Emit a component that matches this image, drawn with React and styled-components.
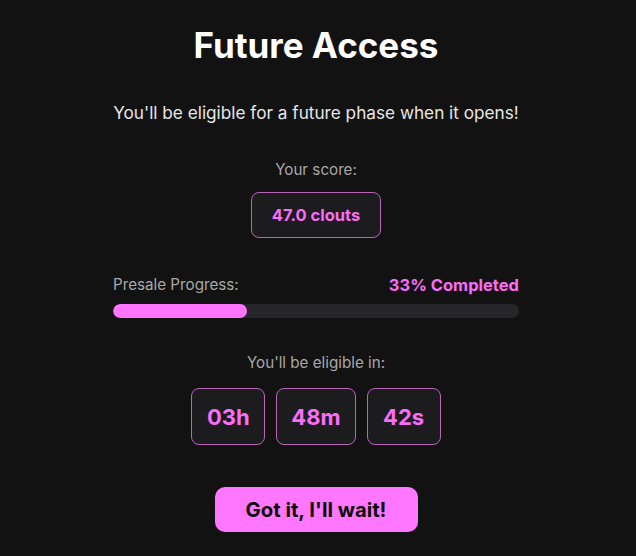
import React from "react";
import styled, { createGlobalStyle } from "styled-components";

const Global = createGlobalStyle`
  html, body { margin: 0; padding: 0; background: #121212; }
  body { font-family: Inter, "Noto Sans", sans-serif; color: #fff; }
`;

const Page = styled.div`
  width: 636px;
  height: 556px;
  box-sizing: border-box;
  padding: 24px 0 0 113px;
`;

const Column = styled.div`
  width: 406px;
  display: flex;
  flex-direction: column;
  align-items: center;
`;

const Title = styled.h1`
  margin: 0;
  font-size: 35px;
  font-weight: 700;
  line-height: 42px;
  color: #fff;
`;

const Subtitle = styled.p`
  margin: 35px 0 0;
  font-size: 17.2px;
  line-height: 24px;
  color: #e6e6e6;
  white-space: nowrap;
`;

const Label = styled.div`
  font-size: 15.2px;
  line-height: 20px;
  color: #a8a8a8;
  margin-top: ${(p) => p.$mt}px;
`;

const Box = styled.div`
  box-sizing: border-box;
  border: 1px solid #b865b8;
  border-radius: 8px;
  background: #1c1b1d;
  color: #f86ef8;
  font-weight: 700;
  display: flex;
  align-items: center;
  justify-content: center;
`;

const ScoreBox = styled(Box)`
  margin-top: 12px;
  width: 130px;
  height: 46px;
  font-size: 16.5px;
`;

const ProgressHead = styled.div`
  align-self: stretch;
  margin-top: 37px;
  display: flex;
  justify-content: space-between;
  align-items: flex-end;
`;

const ProgressLabel = styled.span`
  font-size: 15.2px;
  line-height: 20px;
  color: #a8a8a8;
`;

const ProgressValue = styled.span`
  font-size: 16.5px;
  line-height: 20px;
  font-weight: 700;
  color: #f86ef8;
`;

const Track = styled.div`
  align-self: stretch;
  margin-top: 9px;
  height: 14px;
  border-radius: 7px;
  background: #26252a;
  overflow: hidden;
`;

const Fill = styled.div`
  height: 100%;
  border-radius: 7px;
  background: #ff75ff;
`;

const Timer = styled.div`
  margin-top: 15px;
  display: flex;
  gap: 11px;
`;

const TimeBox = styled(Box)`
  height: 57px;
  padding: 0 14px;
  min-width: 74px;
  font-size: 22px;
`;

const Button = styled.button`
  margin-top: 42px;
  width: 203px;
  height: 45px;
  border: none;
  border-radius: 10px;
  background: #ff77ff;
  color: #0c0a0c;
  font-family: Inter, "Noto Sans", sans-serif;
  font-size: 20.3px;
  font-weight: 700;
  cursor: pointer;
`;

export default function App() {
  const progress = 33;
  return (
    <Page>
      <Global />
      <Column>
        <Title>Future Access</Title>
        <Subtitle>You'll be eligible for a future phase when it opens!</Subtitle>
        <Label $mt={35}>Your score:</Label>
        <ScoreBox>47.0 clouts</ScoreBox>
        <ProgressHead>
          <ProgressLabel>Presale Progress:</ProgressLabel>
          <ProgressValue>{progress}% Completed</ProgressValue>
        </ProgressHead>
        <Track>
          <Fill style={{ width: `${progress}%` }} />
        </Track>
        <Label $mt={35}>You'll be eligible in:</Label>
        <Timer>
          <TimeBox>03h</TimeBox>
          <TimeBox>48m</TimeBox>
          <TimeBox>42s</TimeBox>
        </Timer>
        <Button>Got it, I'll wait!</Button>
      </Column>
    </Page>
  );
}
